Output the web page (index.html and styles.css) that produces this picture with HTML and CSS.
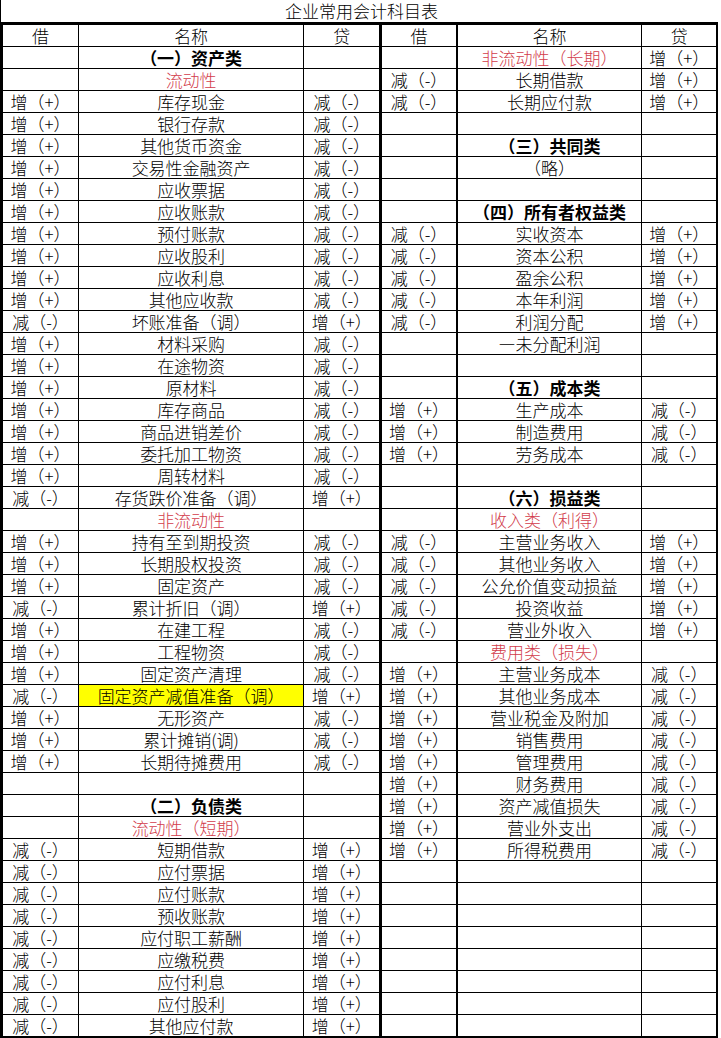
FILE: index.html
```html
<!DOCTYPE html>
<html lang="zh-CN">
<head>
<meta charset="utf-8">
<title>企业常用会计科目表</title>
<link rel="stylesheet" href="styles.css">
</head>
<body>
<div class="page">
  <div class="title">企业常用会计科目表</div>
  <table class="sheet">
    <colgroup>
      <col class="w1"><col class="w2"><col class="w3"><col class="w4"><col class="w5"><col class="w6">
    </colgroup>
    <tbody>
      <tr class="head"><td class="c1">借</td><td class="c2">名称</td><td class="c3">贷</td><td class="c4">借</td><td class="c5">名称</td><td class="c6">贷</td></tr>
      <tr><td class="c1"></td><td class="c2 bold">（一）资产类</td><td class="c3"></td><td class="c4"></td><td class="c5 red">非流动性（长期）</td><td class="c6">增（+）</td></tr>
      <tr><td class="c1"></td><td class="c2 red">流动性</td><td class="c3"></td><td class="c4">减（-）</td><td class="c5">长期借款</td><td class="c6">增（+）</td></tr>
      <tr><td class="c1">增（+）</td><td class="c2">库存现金</td><td class="c3">减（-）</td><td class="c4">减（-）</td><td class="c5">长期应付款</td><td class="c6">增（+）</td></tr>
      <tr><td class="c1">增（+）</td><td class="c2">银行存款</td><td class="c3">减（-）</td><td class="c4"></td><td class="c5"></td><td class="c6"></td></tr>
      <tr><td class="c1">增（+）</td><td class="c2">其他货币资金</td><td class="c3">减（-）</td><td class="c4"></td><td class="c5 bold">（三）共同类</td><td class="c6"></td></tr>
      <tr><td class="c1">增（+）</td><td class="c2">交易性金融资产</td><td class="c3">减（-）</td><td class="c4"></td><td class="c5">（略）</td><td class="c6"></td></tr>
      <tr><td class="c1">增（+）</td><td class="c2">应收票据</td><td class="c3">减（-）</td><td class="c4"></td><td class="c5"></td><td class="c6"></td></tr>
      <tr><td class="c1">增（+）</td><td class="c2">应收账款</td><td class="c3">减（-）</td><td class="c4"></td><td class="c5 bold">（四）所有者权益类</td><td class="c6"></td></tr>
      <tr><td class="c1">增（+）</td><td class="c2">预付账款</td><td class="c3">减（-）</td><td class="c4">减（-）</td><td class="c5">实收资本</td><td class="c6">增（+）</td></tr>
      <tr><td class="c1">增（+）</td><td class="c2">应收股利</td><td class="c3">减（-）</td><td class="c4">减（-）</td><td class="c5">资本公积</td><td class="c6">增（+）</td></tr>
      <tr><td class="c1">增（+）</td><td class="c2">应收利息</td><td class="c3">减（-）</td><td class="c4">减（-）</td><td class="c5">盈余公积</td><td class="c6">增（+）</td></tr>
      <tr><td class="c1">增（+）</td><td class="c2">其他应收款</td><td class="c3">减（-）</td><td class="c4">减（-）</td><td class="c5">本年利润</td><td class="c6">增（+）</td></tr>
      <tr><td class="c1">减（-）</td><td class="c2">坏账准备（调）</td><td class="c3">增（+）</td><td class="c4">减（-）</td><td class="c5">利润分配</td><td class="c6">增（+）</td></tr>
      <tr><td class="c1">增（+）</td><td class="c2">材料采购</td><td class="c3">减（-）</td><td class="c4"></td><td class="c5">—未分配利润</td><td class="c6"></td></tr>
      <tr><td class="c1">增（+）</td><td class="c2">在途物资</td><td class="c3">减（-）</td><td class="c4"></td><td class="c5"></td><td class="c6"></td></tr>
      <tr><td class="c1">增（+）</td><td class="c2">原材料</td><td class="c3">减（-）</td><td class="c4"></td><td class="c5 bold">（五）成本类</td><td class="c6"></td></tr>
      <tr><td class="c1">增（+）</td><td class="c2">库存商品</td><td class="c3">减（-）</td><td class="c4">增（+）</td><td class="c5">生产成本</td><td class="c6">减（-）</td></tr>
      <tr><td class="c1">增（+）</td><td class="c2">商品进销差价</td><td class="c3">减（-）</td><td class="c4">增（+）</td><td class="c5">制造费用</td><td class="c6">减（-）</td></tr>
      <tr><td class="c1">增（+）</td><td class="c2">委托加工物资</td><td class="c3">减（-）</td><td class="c4">增（+）</td><td class="c5">劳务成本</td><td class="c6">减（-）</td></tr>
      <tr><td class="c1">增（+）</td><td class="c2">周转材料</td><td class="c3">减（-）</td><td class="c4"></td><td class="c5"></td><td class="c6"></td></tr>
      <tr><td class="c1">减（-）</td><td class="c2">存货跌价准备（调）</td><td class="c3">增（+）</td><td class="c4"></td><td class="c5 bold">（六）损益类</td><td class="c6"></td></tr>
      <tr><td class="c1"></td><td class="c2 red">非流动性</td><td class="c3"></td><td class="c4"></td><td class="c5 red">收入类（利得）</td><td class="c6"></td></tr>
      <tr><td class="c1">增（+）</td><td class="c2">持有至到期投资</td><td class="c3">减（-）</td><td class="c4">减（-）</td><td class="c5">主营业务收入</td><td class="c6">增（+）</td></tr>
      <tr><td class="c1">增（+）</td><td class="c2">长期股权投资</td><td class="c3">减（-）</td><td class="c4">减（-）</td><td class="c5">其他业务收入</td><td class="c6">增（+）</td></tr>
      <tr><td class="c1">增（+）</td><td class="c2">固定资产</td><td class="c3">减（-）</td><td class="c4">减（-）</td><td class="c5">公允价值变动损益</td><td class="c6">增（+）</td></tr>
      <tr><td class="c1">减（-）</td><td class="c2">累计折旧（调）</td><td class="c3">增（+）</td><td class="c4">减（-）</td><td class="c5">投资收益</td><td class="c6">增（+）</td></tr>
      <tr><td class="c1">增（+）</td><td class="c2">在建工程</td><td class="c3">减（-）</td><td class="c4">减（-）</td><td class="c5">营业外收入</td><td class="c6">增（+）</td></tr>
      <tr><td class="c1">增（+）</td><td class="c2">工程物资</td><td class="c3">减（-）</td><td class="c4"></td><td class="c5 red">费用类（损失）</td><td class="c6"></td></tr>
      <tr><td class="c1">增（+）</td><td class="c2">固定资产清理</td><td class="c3">减（-）</td><td class="c4">增（+）</td><td class="c5">主营业务成本</td><td class="c6">减（-）</td></tr>
      <tr><td class="c1">减（-）</td><td class="c2 hl">固定资产减值准备（调）</td><td class="c3">增（+）</td><td class="c4">增（+）</td><td class="c5">其他业务成本</td><td class="c6">减（-）</td></tr>
      <tr><td class="c1">增（+）</td><td class="c2">无形资产</td><td class="c3">减（-）</td><td class="c4">增（+）</td><td class="c5">营业税金及附加</td><td class="c6">减（-）</td></tr>
      <tr><td class="c1">增（+）</td><td class="c2">累计摊销(调)</td><td class="c3">减（-）</td><td class="c4">增（+）</td><td class="c5">销售费用</td><td class="c6">减（-）</td></tr>
      <tr><td class="c1">增（+）</td><td class="c2">长期待摊费用</td><td class="c3">减（-）</td><td class="c4">增（+）</td><td class="c5">管理费用</td><td class="c6">减（-）</td></tr>
      <tr><td class="c1"></td><td class="c2"></td><td class="c3"></td><td class="c4">增（+）</td><td class="c5">财务费用</td><td class="c6">减（-）</td></tr>
      <tr><td class="c1"></td><td class="c2 bold">（二）负债类</td><td class="c3"></td><td class="c4">增（+）</td><td class="c5">资产减值损失</td><td class="c6">减（-）</td></tr>
      <tr><td class="c1"></td><td class="c2 red">流动性（短期）</td><td class="c3"></td><td class="c4">增（+）</td><td class="c5">营业外支出</td><td class="c6">减（-）</td></tr>
      <tr><td class="c1">减（-）</td><td class="c2">短期借款</td><td class="c3">增（+）</td><td class="c4">增（+）</td><td class="c5">所得税费用</td><td class="c6">减（-）</td></tr>
      <tr><td class="c1">减（-）</td><td class="c2">应付票据</td><td class="c3">增（+）</td><td class="c4"></td><td class="c5"></td><td class="c6"></td></tr>
      <tr><td class="c1">减（-）</td><td class="c2">应付账款</td><td class="c3">增（+）</td><td class="c4"></td><td class="c5"></td><td class="c6"></td></tr>
      <tr><td class="c1">减（-）</td><td class="c2">预收账款</td><td class="c3">增（+）</td><td class="c4"></td><td class="c5"></td><td class="c6"></td></tr>
      <tr><td class="c1">减（-）</td><td class="c2">应付职工薪酬</td><td class="c3">增（+）</td><td class="c4"></td><td class="c5"></td><td class="c6"></td></tr>
      <tr><td class="c1">减（-）</td><td class="c2">应缴税费</td><td class="c3">增（+）</td><td class="c4"></td><td class="c5"></td><td class="c6"></td></tr>
      <tr><td class="c1">减（-）</td><td class="c2">应付利息</td><td class="c3">增（+）</td><td class="c4"></td><td class="c5"></td><td class="c6"></td></tr>
      <tr><td class="c1">减（-）</td><td class="c2">应付股利</td><td class="c3">增（+）</td><td class="c4"></td><td class="c5"></td><td class="c6"></td></tr>
      <tr class="last"><td class="c1">减（-）</td><td class="c2">其他应付款</td><td class="c3">增（+）</td><td class="c4"></td><td class="c5"></td><td class="c6"></td></tr>
    </tbody>
  </table>
</div>
</body>
</html>
```
FILE: styles.css
```css
html, body {
  margin: 0;
  padding: 0;
  background: #ffffff;
}
body {
  font-family: "Noto Sans CJK SC", "Noto Sans", sans-serif;
  font-size: 17px;
  font-weight: 300;
  color: #000000;
}
.page {
  width: 721px;
}
.title {
  height: 22px;
  line-height: 22px;
  text-align: center;
  border-left: 1px solid #000;
  box-sizing: border-box;
  padding-left: 1px;
}
.sheet {
  border-collapse: collapse;
  table-layout: fixed;
  width: 718px;
}
.w1 { width: 77px; }
.w2 { width: 225px; }
.w3 { width: 77px; }
.w4 { width: 76px; }
.w5 { width: 185px; }
.w6 { width: 75px; }
.sheet td {
  border: 1px solid #000;
  height: 21px;
  padding: 0;
  line-height: 21px;
  text-align: center;
  white-space: nowrap;
  overflow: hidden;
}
.sheet td.c1 { border-left: 3px solid #000; }
.sheet td.c3 { border-right: 3px solid #000; }
.sheet td.c4 { border-left: 3px solid #000; border-right: 2px solid #000; }
.sheet td.c6 { border-right: 2px solid #000; }
.sheet tr.head td { border-top: 3px solid #000; }
.sheet tr.last td { border-bottom: 3px solid #000; }
.bold { font-weight: 700; }
.red { color: #d23c4b; }
.hl { background: #ffff00; }
```
